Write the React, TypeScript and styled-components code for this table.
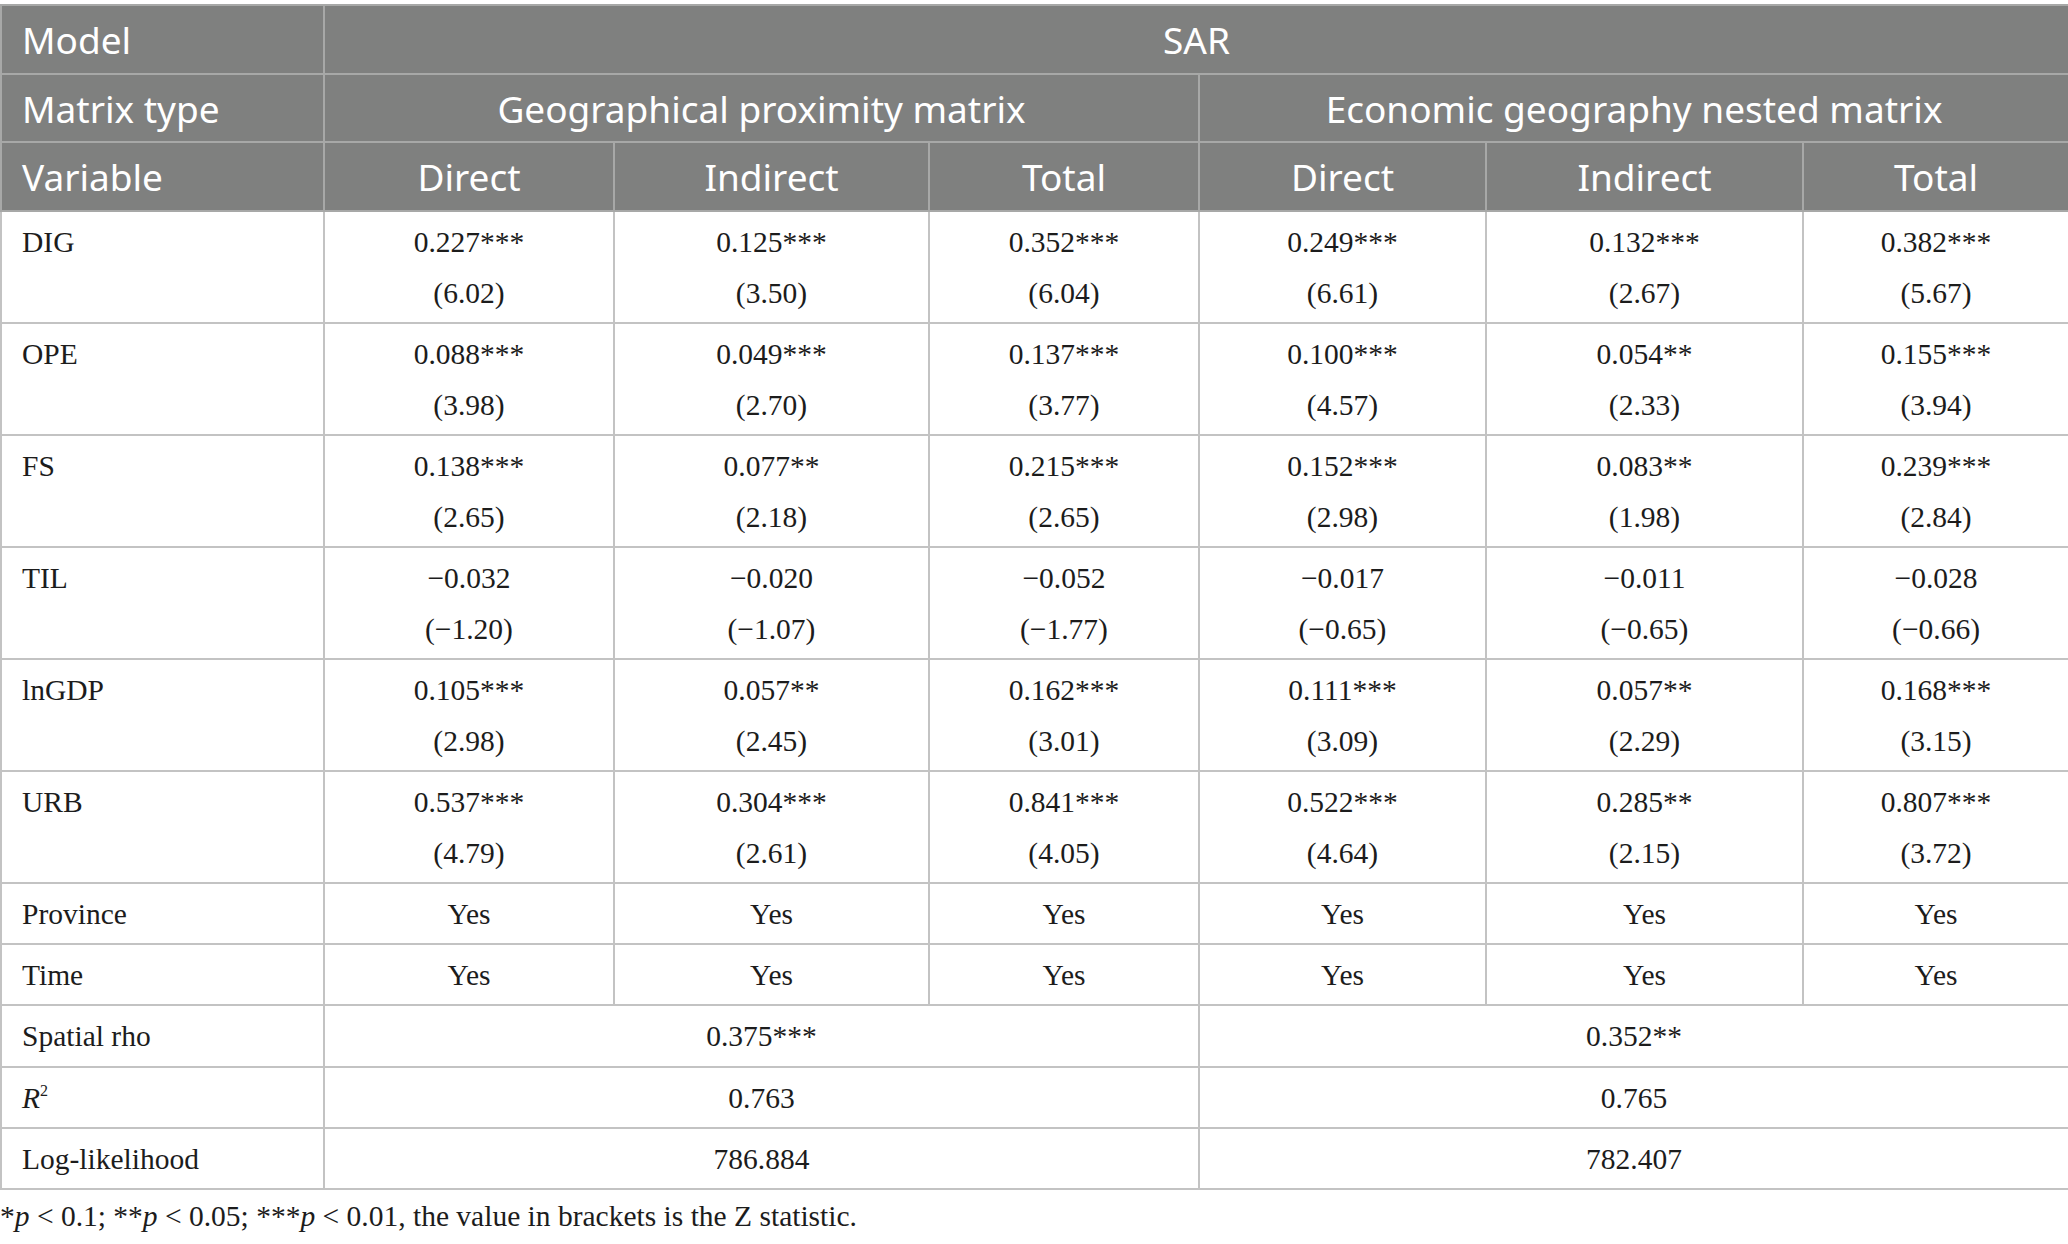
import React from "react";
import styled, { createGlobalStyle } from "styled-components";

const Global = createGlobalStyle`
  html, body { margin: 0; padding: 0; background: #ffffff; }
  body { font-family: "Liberation Serif", "Times New Roman", serif; color: #1c1c1c; }
`;

const Page = styled.div`
  padding-top: 4px;
  width: 2068px;
`;

const Table = styled.table`
  width: 2068px;
  table-layout: fixed;
  border-collapse: collapse;
`;

const HeadCell = styled.th<{ $align?: "left" | "center" }>`
  background: #7f807f;
  color: #ffffff;
  font-family: "Noto Sans", "Open Sans", sans-serif;
  font-weight: 400;
  font-size: 37px;
  line-height: 48px;
  height: 68.6px;
  padding: 2px 0 0 ${(p) => (p.$align === "left" ? "20px" : "0")};
  text-align: ${(p) => p.$align ?? "center"};
  vertical-align: middle;
  border: 2px solid #a7a8a7;
  box-sizing: border-box;
`;

const Cell = styled.td<{ $align?: "left" | "center"; $tall?: boolean }>`
  font-size: 29.5px;
  line-height: 51px;
  height: ${(p) => (p.$tall ? "110px" : "61.3px")};
  padding: ${(p) => (p.$align === "left" ? "5px 0 3px 20px" : "5px 0 3px")};
  text-align: ${(p) => p.$align ?? "center"};
  vertical-align: top;
  border: 2px solid #c3c3c3;
  box-sizing: border-box;
`;

const Line = styled.div`
  white-space: nowrap;
`;

const Note = styled.p`
  margin: 6px 0 0 0;
  font-size: 29.5px;
  line-height: 40px;
  white-space: nowrap;
`;

const Sup = styled.sup`
  font-size: 16px;
  vertical-align: 12px;
  line-height: 0;
`;

type DataRow = { name: string; vals: [string, string][] };

const rows: DataRow[] = [
  { name: "DIG", vals: [["0.227***", "(6.02)"], ["0.125***", "(3.50)"], ["0.352***", "(6.04)"], ["0.249***", "(6.61)"], ["0.132***", "(2.67)"], ["0.382***", "(5.67)"]] },
  { name: "OPE", vals: [["0.088***", "(3.98)"], ["0.049***", "(2.70)"], ["0.137***", "(3.77)"], ["0.100***", "(4.57)"], ["0.054**", "(2.33)"], ["0.155***", "(3.94)"]] },
  { name: "FS", vals: [["0.138***", "(2.65)"], ["0.077**", "(2.18)"], ["0.215***", "(2.65)"], ["0.152***", "(2.98)"], ["0.083**", "(1.98)"], ["0.239***", "(2.84)"]] },
  { name: "TIL", vals: [["\u22120.032", "(\u22121.20)"], ["\u22120.020", "(\u22121.07)"], ["\u22120.052", "(\u22121.77)"], ["\u22120.017", "(\u22120.65)"], ["\u22120.011", "(\u22120.65)"], ["\u22120.028", "(\u22120.66)"]] },
  { name: "lnGDP", vals: [["0.105***", "(2.98)"], ["0.057**", "(2.45)"], ["0.162***", "(3.01)"], ["0.111***", "(3.09)"], ["0.057**", "(2.29)"], ["0.168***", "(3.15)"]] },
  { name: "URB", vals: [["0.537***", "(4.79)"], ["0.304***", "(2.61)"], ["0.841***", "(4.05)"], ["0.522***", "(4.64)"], ["0.285**", "(2.15)"], ["0.807***", "(3.72)"]] },
];

const widths = [323, 290, 315, 270, 287, 317, 266];
const subHeads = ["Direct", "Indirect", "Total", "Direct", "Indirect", "Total"];

export default function App() {
  return (
    <Page>
      <Global />
      <Table>
        <colgroup>
          {widths.map((w, i) => (
            <col key={i} style={{ width: w }} />
          ))}
        </colgroup>
        <thead>
          <tr>
            <HeadCell $align="left">Model</HeadCell>
            <HeadCell colSpan={6}>SAR</HeadCell>
          </tr>
          <tr>
            <HeadCell $align="left">Matrix type</HeadCell>
            <HeadCell colSpan={3}>Geographical proximity matrix</HeadCell>
            <HeadCell colSpan={3}>Economic geography nested matrix</HeadCell>
          </tr>
          <tr>
            <HeadCell $align="left">Variable</HeadCell>
            {subHeads.map((h, i) => (
              <HeadCell key={i}>{h}</HeadCell>
            ))}
          </tr>
        </thead>
        <tbody>
          {rows.map((r) => (
            <tr key={r.name}>
              <Cell $align="left" $tall>
                <Line>{r.name}</Line>
              </Cell>
              {r.vals.map(([a, b], i) => (
                <Cell key={i} $tall>
                  <Line>{a}</Line>
                  <Line>{b}</Line>
                </Cell>
              ))}
            </tr>
          ))}
          {["Province", "Time"].map((n) => (
            <tr key={n}>
              <Cell $align="left">{n}</Cell>
              {subHeads.map((_, i) => (
                <Cell key={i}>Yes</Cell>
              ))}
            </tr>
          ))}
          <tr>
            <Cell $align="left">Spatial rho</Cell>
            <Cell colSpan={3}>0.375***</Cell>
            <Cell colSpan={3}>0.352**</Cell>
          </tr>
          <tr>
            <Cell $align="left">
              <i>R</i>
              <Sup>2</Sup>
            </Cell>
            <Cell colSpan={3}>0.763</Cell>
            <Cell colSpan={3}>0.765</Cell>
          </tr>
          <tr>
            <Cell $align="left">Log-likelihood</Cell>
            <Cell colSpan={3}>786.884</Cell>
            <Cell colSpan={3}>782.407</Cell>
          </tr>
        </tbody>
      </Table>
      <Note>
        *<i>p</i> &lt; 0.1; **<i>p</i> &lt; 0.05; ***<i>p</i> &lt; 0.01, the value in brackets is the Z statistic.
      </Note>
    </Page>
  );
}
